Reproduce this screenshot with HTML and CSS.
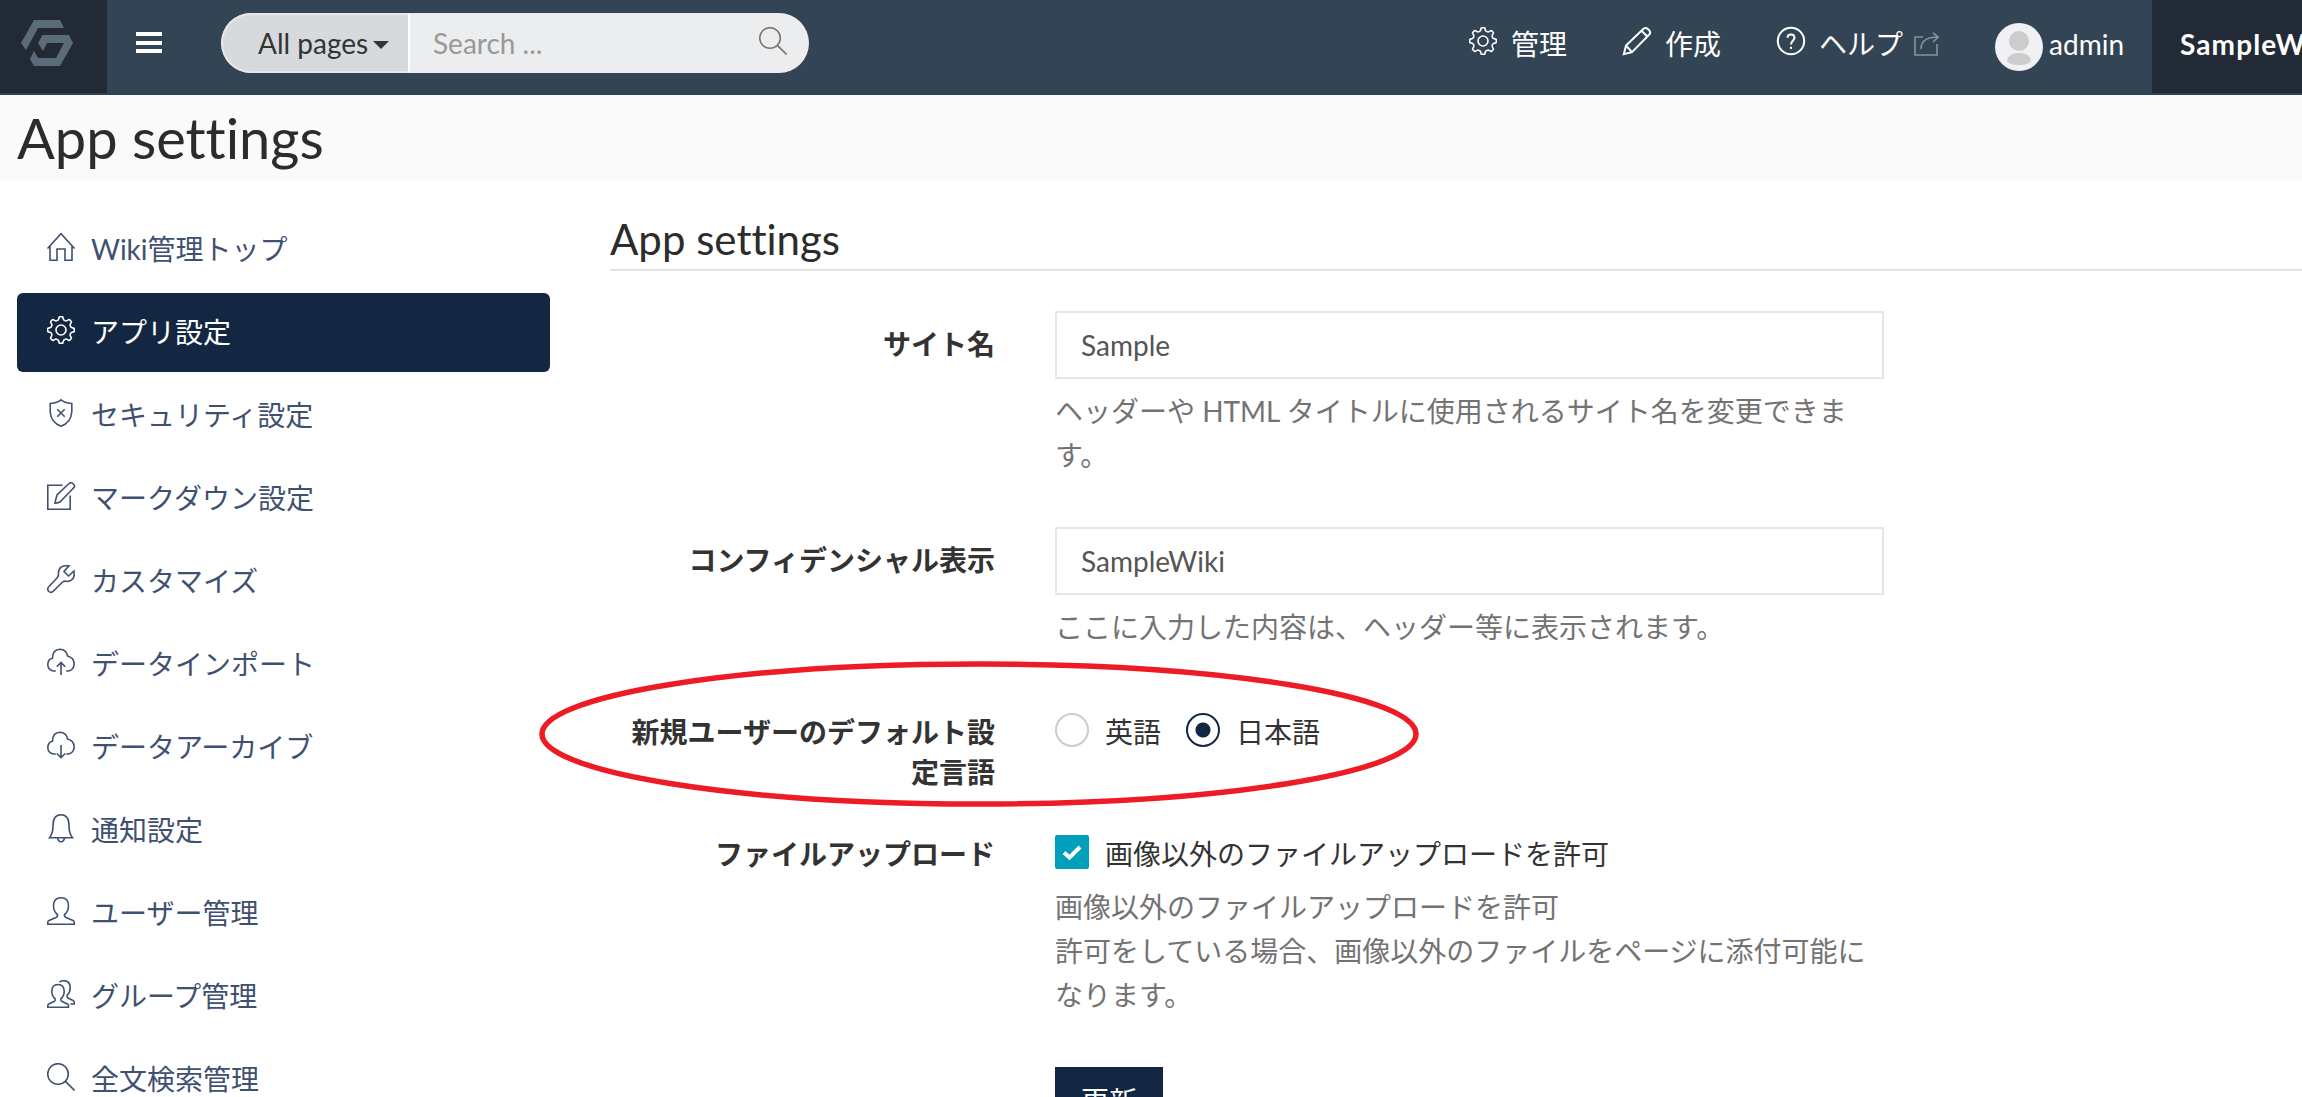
FILE: index.html
```html
<!DOCTYPE html>
<html lang="ja">
<head>
<meta charset="utf-8">
<title>App settings</title>
<link rel="stylesheet" href="styles.css">
</head>
<body>
<svg class="sprite" aria-hidden="true">
  <symbol id="gear" viewBox="0 0 28 28">
    <g transform="translate(14 14)">
      <path id="tooth" d="M-3.9-9.4Q-2.6-9.8-2.3-11L-1.9-12.7Q-1.7-13.3-1-13.3H1Q1.7-13.3 1.9-12.7L2.3-11Q2.6-9.8 3.9-9.4"/>
      <use href="#tooth" transform="rotate(45)"/><use href="#tooth" transform="rotate(90)"/><use href="#tooth" transform="rotate(135)"/><use href="#tooth" transform="rotate(180)"/><use href="#tooth" transform="rotate(225)"/><use href="#tooth" transform="rotate(270)"/><use href="#tooth" transform="rotate(315)"/>
      <circle r="5"/>
    </g>
  </symbol>
  <symbol id="search" viewBox="0 0 28 28"><circle cx="11" cy="11" r="10.3"/><path d="M18.4 18.4L27.5 27.5"/></symbol>
</svg>

<header class="navbar">
  <a class="brand" href="#">
    <svg width="52" height="46" viewBox="0 0 52 46"><path d="M13 0H39L43 8H17L5 30L0 23ZM21.500 15H48L52 23L39 46H13L9 39L13 31L17 38H35L43 23H26L22 31L17 23Z"/></svg>
  </a>
  <button class="menu" aria-label="menu"><span></span><span></span><span></span></button>
  <div class="search">
    <button class="scope">All pages<span class="caret"></span></button>
    <div class="query"><span>Search ...</span><svg class="icon"><use href="#search"/></svg></div>
  </div>
  <nav class="links">
    <a class="link link-admin"><svg class="icon"><use href="#gear"/></svg>管理</a>
    <a class="link link-create"><svg class="icon" viewBox="0 0 28 28"><path d="M.8 27.200L3 18.500L20.500 1.800Q22.500.2 24.600 1.800L26.400 3.600Q28 5.600 26.300 7.500L9 25.200ZM3 18.500L9 25.200M18.500 3.800L24.300 9.500"/></svg>作成</a>
    <a class="link link-help"><svg class="icon" viewBox="0 0 28 28"><circle cx="14" cy="14" r="13.200"/><path d="M10.500 10.800Q10.500 7.500 14 7.500T17.500 10.800C17.500 13.500 14 13.500 14 17.500M14 19.800V22"/></svg>ヘルプ<svg class="ext" viewBox="0 0 26 24"><path d="M9 5H1V23H23V12M7 17Q7 5 24 5M19 .8L24.300 5L19 10"/></svg></a>
    <a class="link link-user"><svg class="avatar" viewBox="0 0 48 48"><circle class="face" cx="24" cy="24" r="24"/><circle cx="24" cy="18" r="10"/><path d="M12 38Q13 30 24 30T36 38Q34 42 24 42T12 38Z"/></svg>admin</a>
  </nav>
  <div class="confidential">SampleWiki</div>
</header>

<div class="title"><h1>App settings</h1></div>

<div class="page">
  <aside class="sidebar">
    <a class="item"><svg class="icon" viewBox="0 0 28 28"><path d="M.5 15.500L14 .8L27.500 15.500M3 13V27.300H10V16H18V27.300H25V13"/></svg>Wiki管理トップ</a>
    <a class="item active"><svg class="icon"><use href="#gear"/></svg>アプリ設定</a>
    <a class="item"><svg class="icon" viewBox="0 0 28 28"><path d="M14 .8Q11 3.500 3.200 4.500V13Q4 23.500 14 27.300Q24 23.500 24.800 13V4.500Q17 3.500 14 .8ZM10.300 10.300L17.700 17.700M17.700 10.300L10.300 17.700"/></svg>セキュリティ設定</a>
    <a class="item"><svg class="icon" viewBox="0 0 28 28"><path d="M15.500 3.200H.8V27.300H23.200V13.500M8.500 18.500L10 13L21.500 2Q24-.5 26.400 2T26 6.500L14 19Q12.500 20.800 8 21.300Z"/></svg>マークダウン設定</a>
    <a class="item"><svg class="icon" viewBox="0 0 28 28"><path d="M22 .9Q12-.5 11.500 7.500Q12 11 10 13L2 21.500Q-.5 24 1.800 26.500Q4.200 28.500 6.500 26L15 17.500Q17 15.500 20.500 16.500Q28.500 15.500 27 6L21.500 11L17 6.500Z"/></svg>カスタマイズ</a>
    <a class="item"><svg class="icon" viewBox="0 0 28 28"><path d="M8.800 23H6.500Q.8 22 .8 16.500Q1 11 5.500 10.200Q5.500 1.500 13 1.200Q19.500 1.500 20.500 8Q27 9.500 27.200 16Q26.800 22 21.500 23H19.200M14 27V14.500M9.800 18.800L14 14.500L18.200 18.800"/></svg>データインポート</a>
    <a class="item"><svg class="icon" viewBox="0 0 28 28"><path d="M8.800 23H6.500Q.8 22 .8 16.500Q1 11 5.500 10.200Q5.500 1.500 13 1.200Q19.500 1.500 20.500 8Q27 9.500 27.200 16Q26.800 22 21.500 23H19.200M14 14V26.500M9.800 22.500L14 26.700L18.200 22.500"/></svg>データアーカイブ</a>
    <a class="item"><svg class="icon" viewBox="0 0 28 28"><path d="M2.500 26Q6 21.500 6 13Q6 .8 14 .8T22 13Q22 21.500 25.500 26ZM10.500 26Q11 30.500 14 30.500T17.500 26" transform="scale(1 .91)"/></svg>通知設定</a>
    <a class="item"><svg class="icon" viewBox="0 0 28 28"><path d="M14 .8Q6.500.8 6.500 9Q6.800 15 10.500 17.500Q11 19.500 9 20.500L2 23.500Q.8 24 .8 25V27.200H27.200V25Q27.200 24 26 23.500L19 20.500Q17 19.500 17.500 17.500Q21.200 15 21.500 9Q21.500.8 14 .8Z"/></svg>ユーザー管理</a>
    <a class="item"><svg class="icon" viewBox="0 0 28 28"><path d="M11 4.500Q4.800 4.500 4.800 11.500Q5 16.500 8.200 19Q8.500 20.700 7 21.500L1.800 24Q.8 24.500.8 25.500V27.300H21.500V25.500Q21.500 24.500 20.500 24L15 21.500Q13.500 20.700 13.800 19Q17 16.500 17.200 11.500Q17.200 4.500 11 4.500ZM12.500 2Q15 .3 18.500.9Q23.200 2 23.200 8Q23 13 20 15.500Q19.800 17.500 21.500 18.200L26 20.500Q27.200 21 27.200 22V24H23.500"/></svg>グループ管理</a>
    <a class="item"><svg class="icon"><use href="#search"/></svg>全文検索管理</a>
  </aside>

  <main class="main">
    <h2>App settings</h2>
    <div class="row">
      <label class="label">サイト名</label>
      <div class="field">
        <input class="input" value="Sample">
        <p class="help">ヘッダーや HTML タイトルに使用されるサイト名を変更できます。</p>
      </div>
    </div>
    <div class="row">
      <label class="label">コンフィデンシャル表示</label>
      <div class="field">
        <input class="input" value="SampleWiki">
        <p class="help">ここに入力した内容は、ヘッダー等に表示されます。</p>
      </div>
    </div>
    <div class="row row-language">
      <label class="label">新規ユーザーのデフォルト設定言語</label>
      <div class="field options">
        <label class="option"><span class="radio"></span>英語</label>
        <label class="option"><span class="radio checked"></span>日本語</label>
      </div>
      <svg class="marker" viewBox="0 0 880 146"><ellipse cx="440" cy="73" rx="437" ry="70"/></svg>
    </div>
    <div class="row">
      <label class="label">ファイルアップロード</label>
      <div class="field">
        <div class="options"><label class="option"><svg class="check" viewBox="0 0 34 34"><path d="M9 17.500L14.500 22.500L25 12"/></svg>画像以外のファイルアップロードを許可</label></div>
        <p class="help">画像以外のファイルアップロードを許可<br>許可をしている場合、画像以外のファイルをページに添付可能になります。</p>
      </div>
    </div>
    <div class="row"><span></span><div class="field"><button class="submit">更新</button></div></div>
  </main>
</div>
</body>
</html>
```
FILE: styles.css
```css
* { box-sizing: border-box; }
html, body { height: 100%; overflow: hidden; }
body {
  margin: 0;
  background: #fff;
  color: #333;
  font: 28px/40px Lato, "Noto Sans CJK JP", sans-serif;
  font-variant-ligatures: none;
}
h1, h2, p { margin: 0; font-weight: 400; }
button, input { margin: 0; border: 0; border-radius: 0; background: none; font: inherit; color: inherit; }
.sprite { display: none; }
svg { flex: none; }
.icon { width: 28px; height: 28px; overflow: visible; }
.icon, .ext, symbol { fill: none; stroke: currentColor; stroke-width: 1.6; }

/* top bar */
.navbar {
  display: flex;
  height: 95px;
  background: #334455;
  border-bottom: 2px solid #2f4156;
  color: #fff;
  white-space: nowrap;
}
.brand { flex: none; width: 107px; background: #222b35; padding: 20px 0 0 21px; }
.brand svg { display: block; fill: #5c6b7a; }
.menu { flex: none; width: 26px; margin: 32px 0 0 29px; padding: 0; height: 21px; display: flex; flex-direction: column; justify-content: space-between; }
.menu span { height: 4px; background: #fff; }
.search { flex: none; display: flex; width: 588px; height: 60px; margin: 13px 0 0 59px; border-radius: 30px; overflow: hidden; background: #ebedee; }
.scope { display: flex; align-items: center; width: 189px; padding: 0 0 0 35px; border: 2px solid #e5e7e9; border-right-color: #fff; border-radius: 30px 0 0 30px; background: #d6dadd; color: #333; }
.caret { margin: 3px 0 0 5px; border: 8px solid transparent; border-top-color: #333; border-bottom: 0; }
.query { flex: 1; display: flex; justify-content: space-between; padding: 10px 22px 0 23px; color: #999; }
.query .icon { margin-top: 4px; color: #777; }
.links { display: flex; margin-left: 660px; padding-top: 23px; }
.link { display: flex; line-height: 42px; }
.link .icon { margin: 4px 14px 0 0; stroke-width: 2; }
.link-create, .link-help { margin-left: 56px; }
.ext { width: 26px; height: 24px; margin: 9px 0 0 11px; color: #8592a0; stroke-width: 1.6; }
.link-user { margin-left: 55px; }
.avatar { width: 48px; height: 48px; margin-right: 6px; fill: #ccc; }
.face { fill: #f0f1f5; }
.confidential { margin-left: auto; flex: none; width: 150px; padding: 23px 0 0 28px; background: #222b35; font-weight: 700; letter-spacing: 1.1px; line-height: 42px; overflow: hidden; }

/* page heading */
.title { height: 85px; padding: 9px 17px 0; background: #fafafa; }
.title h1 { font-size: 56px; line-height: 68px; color: #2c2c2c; }

.page { display: flex; padding: 30px 0 0 17px; }

.sidebar { flex: none; display: flex; flex-direction: column; gap: 4px; width: 533px; margin-right: 60px; }
.item { display: flex; align-items: center; height: 79px; padding: 0 0 2px 30px; border-radius: 6px; color: #3f5170; }
.item .icon { margin: -3px 16px 0 0; }
.active { background: #132743; color: #fff; }
.active .icon { stroke-width: 2; }

.main { flex: none; width: 1692px; }
.main h2 { height: 61px; margin-bottom: 40px; border-bottom: 2px solid #e2e2e4; font-size: 42px; line-height: 58px; color: #2c2c2c; }
.row { position: relative; display: grid; grid-template-columns: 385px 829px; column-gap: 60px; margin-bottom: 50px; }
.row-language { margin-bottom: 29px; }
.label { padding-top: 13px; text-align: right; font-weight: 700; word-break: break-all; }
.input { display: block; width: 829px; height: 68px; padding: 0 24px; border: 2px solid #e4e7ea; color: #555; }
.help { margin-top: 10px; line-height: 44px; color: #737373; }
.options { display: flex; gap: 25px; padding-top: 14px; }
.option { display: flex; height: 40px; line-height: 39px; }
.radio { width: 34px; height: 34px; margin-right: 16px; border: 2px solid #ccc; border-radius: 50%; }
.radio.checked { border-color: #132743; background: radial-gradient(circle, #132743 7px, transparent 8px); }
.check { width: 34px; height: 34px; margin-right: 16px; border-radius: 2px; background: #009fbc; fill: none; stroke: #fff; stroke-width: 4; }
.marker { position: absolute; left: -71px; top: -38px; width: 880px; height: 146px; fill: none; stroke: #ed1c24; stroke-width: 5.5; }
.submit { width: 108px; height: 68px; background: #132743; color: #fff; }
```
